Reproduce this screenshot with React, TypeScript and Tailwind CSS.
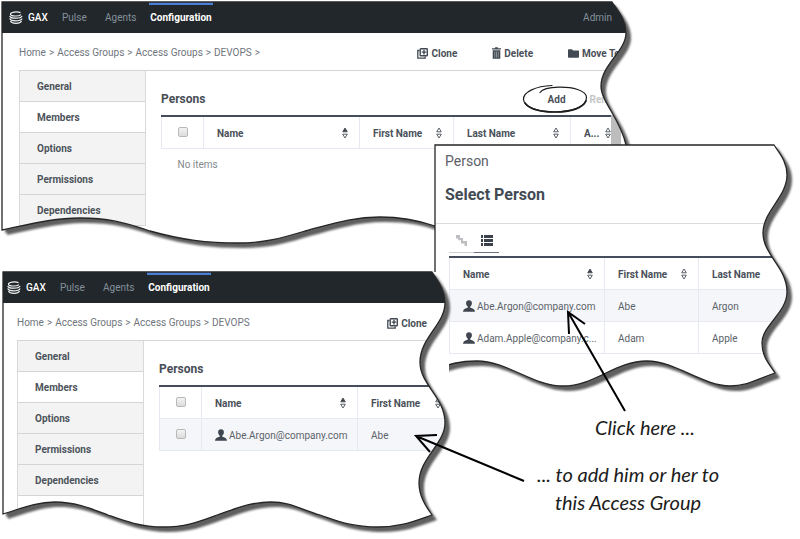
import React from "react";

type SortState = "none" | "asc";

interface TornWindowProps {
  className: string;
  outline: string;
  children: React.ReactNode;
}

interface Column {
  label: string;
  width: string;
  sort?: SortState;
}

const FIRST_OUTLINE =
  "M0 0H610C616 9 624 18 624 31C624 49 599 63 599 84C599 100 618 116 624 143V224H433C415 218 400 215 378 215C350 215 330 222 303 229C280 236 262 241 237 241C205 241 180 238 148 229C122 220 105 216 78 216C50 216 25 223 0 228Z";

const PICKER_OUTLINE =
  "M0 0H339C345 9 352 17 352 30C352 52 328 66 328 88C328 110 352 122 352 147C352 168 327 180 327 198C327 213 336 221 340 228C320 235 312 241 295 241C268 241 240 216 212 216C180 216 160 241 128 241C98 241 72 216 42 216C25 216 12 219 0 225Z";

const RESULT_OUTLINE =
  "M3 0H432C438 9 445 18 445 31C445 52 420 66 420 90C420 113 445 125 445 151C445 172 419 186 419 211C419 226 428 237 432 243C412 250 400 255 378 255C350 255 335 248 320 243C300 237 290 230 271 230C250 230 235 237 217 243C198 250 185 255 163 255C140 255 122 248 108 243C92 237 75 230 55 230C35 230 20 237 3 242Z";

const tabs = ["General", "Members", "Options", "Permissions", "Dependencies"];

const people = [
  { email: "Abe.Argon@company.com", first: "Abe", last: "Argon" },
  { email: "Adam.Apple@company.c...", first: "Adam", last: "Apple" },
];

/* ---------- icons ---------- */

const LogoIcon = () => (
  <svg className="h-[14px] w-[14px]" viewBox="0 0 14 14" fill="none" stroke="#f1f1f1" strokeWidth="1.2">
    <path d="M11.500 1.600C8 .4 1.500 1 1.500 3.200c0 2.200 8.600 2.400 10.500.4" />
    <path d="M.8 4.800c.4 3.100 10.800 3.200 12.300.2" />
    <path d="M.8 7.400c.6 3.200 11 3.200 12.300 0" />
    <path d="M1.500 10.100c1.400 3 9.600 3 11 0" />
  </svg>
);

const CloneIcon = () => (
  <svg className="h-[11px] w-[11px]" viewBox="0 0 11 11">
    <path d="M2.500 2.500H.8v7.700h7.400V8.500" fill="none" stroke="#434a54" strokeWidth="1.300" />
    <rect x="3.200" y=".7" width="7.100" height="7.100" rx=".6" fill="#fff" stroke="#434a54" strokeWidth="1.400" />
    <path d="M7 1.800v4.600M4.700 4.100h4.600" stroke="#434a54" strokeWidth="1.400" />
  </svg>
);

const TrashIcon = () => (
  <svg className="h-[12px] w-[9px]" viewBox="0 0 9 12" fill="#434a54">
    <path d="M0 1.200h2.800L3.300.3h2.400l.5.9H9v1.300H0z" />
    <path d="M.7 3.300h7.600V11.700H.7z" />
    <path d="M2.800 4.500v6M4.500 4.500v6M6.200 4.500v6" stroke="#9aa0a8" strokeWidth=".8" />
  </svg>
);

const FolderIcon = () => (
  <svg className="h-[9px] w-[11px]" viewBox="0 0 11 9" fill="#434a54">
    <path d="M0 1Q0 .2.8.2h3l1.300 1.300h5.100q.8 0 .8.8v5.700q0 .8-.8.8H.8Q0 8.800 0 8z" />
  </svg>
);

const PersonIcon = () => (
  <svg className="h-3 w-3 shrink-0" viewBox="0 0 12 12" fill="#3f4650">
    <path d="M6 .2c1.900 0 3 1.300 2.900 3C8.800 4.900 8.100 6 7.300 6.600v1.200c2.400.6 4.500 1.300 4.700 4H0c.2-2.700 2.300-3.400 4.700-4V6.600C3.900 6 3.200 4.900 3.100 3.200 3 1.500 4.100.2 6 .2z" />
  </svg>
);

const TreeIcon = () => (
  <svg className="h-3 w-3" viewBox="0 0 12 12" fill="#bcbec1">
    <path d="M0 1h4v3h3v3h4v5H8.500V9.500H5V6.300H2.200V4.500H0z" />
  </svg>
);

const ListIcon = () => (
  <svg className="h-[11px] w-[12px]" viewBox="0 0 12 11" fill="#3b424c">
    <path d="M0 0h2v3H0zM3 0h9v3H3zM0 4h2v3H0zM3 4h9v3H3zM0 8h2v3H0zM3 8h9v3H3z" />
  </svg>
);

const SortIcon = ({ state }: { state: SortState }) => (
  <svg className="h-[12px] w-[6px] shrink-0" viewBox="0 0 6 12" stroke="#4a4f58" strokeWidth=".9">
    <path d="M.7 4.800L3 1l2.300 3.800z" fill={state === "asc" ? "#3b4048" : "none"} />
    <path d="M.7 7.200L3 11l2.300-3.800z" fill="none" />
  </svg>
);

/* ---------- shared parts ---------- */

const TornWindow = ({ className, outline, children }: TornWindowProps) => (
  <section className={`absolute ${className}`}>
    <svg className="absolute inset-0 h-full w-full overflow-visible blur-[1px]">
      <path d={outline} transform="translate(3 3)" fill="#5f5f5f" />
      <path d={outline} transform="translate(5 5)" fill="#5f5f5f" />
    </svg>
    <div className="relative h-full bg-white" style={{ clipPath: `path("${outline}")` }}>
      {children}
    </div>
    <svg className="pointer-events-none absolute inset-0 h-full w-full overflow-visible">
      <path d={outline} fill="none" stroke="#262626" strokeWidth="1.300" />
    </svg>
  </section>
);

const TopBar = ({ user }: { user?: string }) => (
  <header className="flex h-[31px] items-center bg-[#22272b] pr-[23px] pl-[7px] text-[10px] text-[#84909c]">
    <LogoIcon />
    <span className="ml-[5px] w-[34px] font-medium text-white">GAX</span>
    <a href="#pulse" className="w-[43px]">Pulse</a>
    <a href="#agents" className="w-[44px]">Agents</a>
    <a
      href="#configuration"
      className="flex h-full w-16 items-center justify-center border-t-3 border-[#4a7fd6] pb-[3px] font-bold text-white"
    >
      Configuration
    </a>
    {user && <span className="ml-auto">{user}</span>}
  </header>
);

const Crumbs = ({ trailing }: { trailing?: boolean }) => (
  <nav className="flex gap-[3px] pt-[2px] text-[10px] text-[#6f757d]">
    <a href="#home">Home</a>
    <span>&gt;</span>
    <a href="#groups">Access Groups</a>
    <span>&gt;</span>
    <a href="#access">Access Groups</a>
    <span>&gt;</span>
    <a href="#devops">DEVOPS</a>
    {trailing && <span>&gt;</span>}
  </nav>
);

const Action = ({ icon, label }: { icon: React.ReactNode; label: string }) => (
  <button type="button" className="flex items-center gap-[3px] pt-[3px] text-[10px] font-bold whitespace-nowrap text-[#4a5059]">
    {icon}
    {label}
  </button>
);

const SideTabs = () => (
  <ul className="w-[127px] shrink-0 border-x border-[#d9d9d9] text-[10px] font-bold text-[#4d535b]">
    {tabs.map((tab) => (
      <li key={tab} className="border-b border-[#d5d5d5]">
        <button
          type="button"
          className={`flex h-[30px] w-full items-center pl-[17px] ${tab === "Members" ? "bg-white" : "bg-[#f3f3f3]"}`}
        >
          {tab}
        </button>
      </li>
    ))}
  </ul>
);

const Check = ({ label }: { label: string }) => (
  <input
    type="checkbox"
    aria-label={label}
    className="mx-auto block h-[10px] w-[10px] appearance-none rounded-[2px] border border-[#b9b9b9] bg-linear-to-b from-[#f3f3f3] to-[#dcdcdc]"
  />
);

const HeaderRow = ({ columns, selectable }: { columns: Column[]; selectable?: boolean }) => (
  <>
    <colgroup>
      {selectable && <col className="w-[42px]" />}
      {columns.map((c) => (
        <col key={c.label} className={c.width} />
      ))}
    </colgroup>
    <thead>
      <tr className="h-8 border-t-2 border-b border-t-[#454c5b] border-b-[#e6e9f2] text-left text-[#4a5059]">
        {selectable && (
          <th className="border-l border-[#e6e9f2]">
            <Check label="Select all" />
          </th>
        )}
        {columns.map((c) => (
          <th key={c.label} className="border-l border-[#e6e9f2] pt-[2px] pr-[11px] pl-[13px] font-bold">
            <div className="flex items-center justify-between">
              <span className="whitespace-nowrap">{c.label}</span>
              {c.sort && <SortIcon state={c.sort} />}
            </div>
          </th>
        ))}
      </tr>
    </thead>
  </>
);

const tableClass = "table-fixed border-collapse text-[10px] text-[#5c6269]";
const cellClass = "border-l border-[#e6e9f2] pt-[2px] pl-[13px]";

const EmailCell = ({ email }: { email: string }) => (
  <td className={cellClass}>
    <div className="flex items-center gap-[2px]">
      <PersonIcon />
      <span className="whitespace-nowrap">{email}</span>
    </div>
  </td>
);

/* ---------- windows ---------- */

const EmptyGroupWindow = () => (
  <TornWindow className="top-[2px] left-[2px] h-[246px] w-[633px]" outline={FIRST_OUTLINE}>
    <TopBar user="Admin" />
    <div className="flex h-[37px] items-center justify-between pr-[15px] pl-[17px]">
      <Crumbs trailing />
      <div className="flex gap-[35px]">
        <Action icon={<CloneIcon />} label="Clone" />
        <Action icon={<TrashIcon />} label="Delete" />
        <Action icon={<FolderIcon />} label="Move To" />
      </div>
    </div>
    <div className="ml-[17px] flex border-t border-[#d5d5d5]">
      <SideTabs />
      <div className="flex-1 pl-[15px]">
        <div className="flex h-11 items-center pt-3 pr-[9px]">
          <h2 className="text-[12px] font-bold text-[#474d56]">Persons</h2>
          <button type="button" className="relative ml-auto text-[10px] font-bold text-[#4a5059]">
            Add
            <svg
              className="absolute -top-[8px] -left-[26px] h-[30px] w-[66px]"
              viewBox="0 0 66 30"
              fill="none"
              stroke="#1d1d1d"
              strokeLinecap="round"
            >
              <path d="M30 1.500C14 2 1 8 1.500 15.500c.5 7 13 12.500 31 12.500s32-5.500 32-14.500C64.500 6 50 3 37 3.200 27 3.400 20 5.500 18 8.500" strokeWidth="1.200" />
              <path d="M3 19c4 5.500 15 9 30 9 16 0 28-4 31-11" strokeWidth="1.700" />
            </svg>
          </button>
          <button type="button" disabled className="ml-[24px] text-[10px] font-bold text-[#c4c6c9]">
            Remove
          </button>
        </div>
        <div className="flex">
          <div className="w-[450px] overflow-hidden">
            <table className={`${tableClass} w-[460px]`}>
              <HeaderRow
                selectable
                columns={[
                  { label: "Name", width: "w-[156px]", sort: "asc" },
                  { label: "First Name", width: "w-[94px]", sort: "none" },
                  { label: "Last Name", width: "w-[117px]", sort: "none" },
                  { label: "A...", width: "w-[51px]", sort: "none" },
                ]}
              />
              <tbody>
                <tr className="h-8 text-[#83888e]">
                  <td colSpan={5} className="pl-4">No items</td>
                </tr>
              </tbody>
            </table>
          </div>
          <div className="w-[10px] bg-[#bdbdbd]" />
        </div>
      </div>
    </div>
  </TornWindow>
);

const PickerWindow = () => (
  <TornWindow className="top-[145px] left-[435px] h-[242px] w-[353px]" outline={PICKER_OUTLINE}>
    <div className="h-[79px] border-b border-[#dcdcdc] pl-[10px]">
      <p className="pt-[6px] text-[14px] leading-[20px] text-[#5b6067]">Person</p>
      <h2 className="pt-[14px] text-[16px] leading-[20px] font-bold text-[#434a54]">Select Person</h2>
    </div>
    <div className="flex h-[29px] pl-[14px]">
      <button type="button" aria-label="Tree view" className="flex w-[25px] items-center justify-center border-b border-[#cfcfcf] pt-1">
        <TreeIcon />
      </button>
      <button type="button" aria-label="List view" className="flex w-[25px] items-center justify-center border-b border-[#6d737c] pt-1">
        <ListIcon />
      </button>
    </div>
    <table className={`${tableClass} mt-[3px] ml-[14px] w-[340px]`}>
      <HeaderRow
        columns={[
          { label: "Name", width: "w-[155px]", sort: "asc" },
          { label: "First Name", width: "w-[94px]", sort: "none" },
          { label: "Last Name", width: "w-[91px]" },
        ]}
      />
      <tbody>
        {people.map((p) => (
          <tr key={p.email} className="h-8 border-b border-[#e6e9f2] odd:bg-[#f5f6fa]">
            <EmailCell email={p.email} />
            <td className={cellClass}>{p.first}</td>
            <td className={cellClass}>{p.last}</td>
          </tr>
        ))}
      </tbody>
    </table>
  </TornWindow>
);

const ResultWindow = () => (
  <>
    <div className="absolute top-[272px] left-0 h-[267px] w-[449px] bg-white" />
    <TornWindow className="top-[272px] left-0 h-[256px] w-[445px]" outline={RESULT_OUTLINE}>
      <TopBar />
      <div className="flex h-[37px] items-center justify-between pr-[18px] pl-[17px]">
        <Crumbs />
        <Action icon={<CloneIcon />} label="Clone" />
      </div>
      <div className="ml-[17px] flex h-full border-t border-[#d5d5d5]">
        <SideTabs />
        <div className="flex-1 pl-[15px]">
          <h2 className="flex h-11 items-center pt-3 text-[12px] font-bold text-[#474d56]">Persons</h2>
          <table className={`${tableClass} w-[292px]`}>
            <HeaderRow
              selectable
              columns={[
                { label: "Name", width: "w-[156px]", sort: "asc" },
                { label: "First Name", width: "w-[94px]", sort: "none" },
              ]}
            />
            <tbody>
              <tr className="h-8 border-b border-[#e6e9f2] bg-[#f5f6fa]">
                <td className="border-l border-[#e6e9f2]">
                  <Check label="Select Abe" />
                </td>
                <EmailCell email={people[0].email} />
                <td className={cellClass}>{people[0].first}</td>
              </tr>
            </tbody>
          </table>
        </div>
      </div>
    </TornWindow>
  </>
);

const Arrows = () => (
  <svg
    className="pointer-events-none absolute top-0 left-0 h-[539px] w-[800px]"
    viewBox="0 0 800 539"
    fill="none"
    stroke="#000"
    strokeWidth="2"
  >
    <path d="M625 411L568 312M585 324L568 312L569 334" />
    <path d="M524 481L416 436M437 435L416 436L430 452" />
  </svg>
);

export default function App() {
  return (
    <main className="relative min-h-[539px] overflow-hidden bg-white font-['Roboto',sans-serif]">
      <EmptyGroupWindow />
      <PickerWindow />
      <ResultWindow />
      <Arrows />
      <div className="absolute top-[413px] left-[528px] w-[200px] text-center font-['Lato',sans-serif] text-[20px] leading-[28px] whitespace-nowrap text-[#1c1c1c] italic">
        <p className="pl-[34px]">Click here ...</p>
        <p className="pt-[19px]">
          ... to add him or her to
          <br />
          this Access Group
        </p>
      </div>
    </main>
  );
}
